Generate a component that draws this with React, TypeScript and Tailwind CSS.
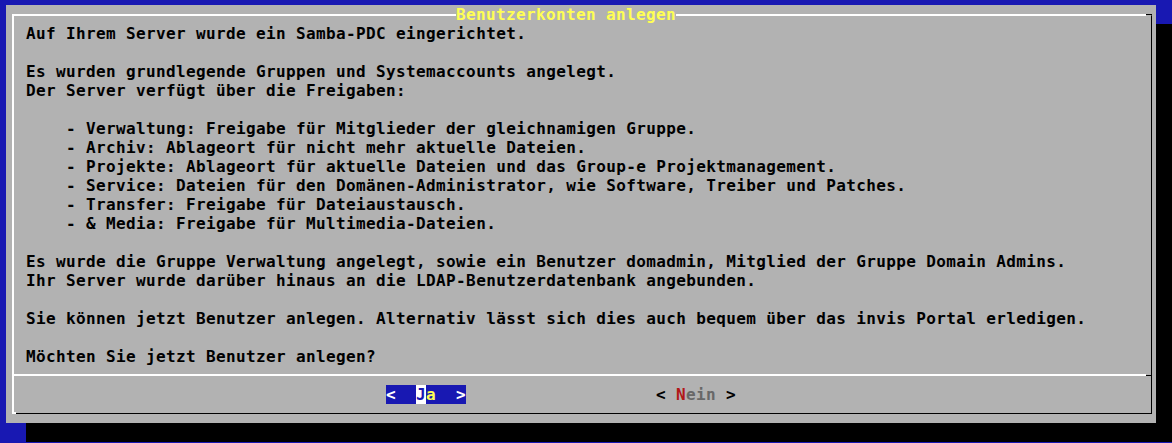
const lines: string[] = [
  'Auf Ihrem Server wurde ein Samba-PDC eingerichtet.',
  '',
  'Es wurden grundlegende Gruppen und Systemaccounts angelegt.',
  'Der Server verfügt über die Freigaben:',
  '',
  '    - Verwaltung: Freigabe für Mitglieder der gleichnamigen Gruppe.',
  '    - Archiv: Ablageort für nicht mehr aktuelle Dateien.',
  '    - Projekte: Ablageort für aktuelle Dateien und das Group-e Projektmanagement.',
  '    - Service: Dateien für den Domänen-Administrator, wie Software, Treiber und Patches.',
  '    - Transfer: Freigabe für Dateiaustausch.',
  '    - & Media: Freigabe für Multimedia-Dateien.',
  '',
  'Es wurde die Gruppe Verwaltung angelegt, sowie ein Benutzer domadmin, Mitglied der Gruppe Domain Admins.',
  'Ihr Server wurde darüber hinaus an die LDAP-Benutzerdatenbank angebunden.',
  '',
  'Sie können jetzt Benutzer anlegen. Alternativ lässt sich dies auch bequem über das invis Portal erledigen.',
  '',
  'Möchten Sie jetzt Benutzer anlegen?',
];

function Button({ label, hot, active }: { label: string; hot: string; active?: boolean }) {
  if (active) {
    return (
      <div className="flex h-[19px] w-[80px] bg-[#1818b2] whitespace-pre text-white">
        <span>{'<  '}</span>
        <span className="bg-white text-[#1818b2]">{hot}</span>
        <span className="text-[#ffff54]">{label}</span>
        <span>{'  >'}</span>
      </div>
    );
  }
  return (
    <div className="flex h-[19px] w-[80px] whitespace-pre text-black">
      <span>{'< '}</span>
      <span className="text-[#b21818]">{hot}</span>
      <span className="text-[#686868]">{label}</span>
      <span>{' >'}</span>
    </div>
  );
}

export default function App() {
  return (
    <div className="h-[443px] w-[1172px] overflow-hidden bg-[#1818b2] pl-[6px] pt-[5px] font-['DejaVu_Sans_Mono',monospace] text-[16px] font-bold leading-[19px] tracking-[0.37px]">
      <div className="h-[418px] w-[1150px] bg-[#b2b2b2] pl-[6px] pt-[9px] shadow-[20px_19px_0_0_#000]">
        <div className="relative flex h-[400px] w-[1140px] flex-col border-t-2 border-l-2 border-r border-b border-t-white border-l-white border-r-black border-b-black">
          <span className="absolute -top-[11px] left-[442px] bg-[#b2b2b2] whitespace-pre text-[#ffff54]">
            Benutzerkonten anlegen
          </span>
          {/* box-drawing corners */}
          <span className="absolute -top-[2px] -right-px flex h-[2px] w-[6px] flex-col">
            <span className="h-px bg-black" />
            <span className="h-px w-[5px] bg-[#b2b2b2]" />
          </span>
          <span className="absolute -bottom-px -left-[2px] h-[2px] w-[4px] bg-white" />

          <div className="pl-[12px] pt-[8px] text-black">
            {lines.map((l, i) => (
              <div key={i} className="h-[19px] whitespace-pre">
                {l}
              </div>
            ))}
          </div>

          <div className="mt-[8px] mb-[9px] flex h-[2px] items-start">
            <div className="h-[2px] w-[1132px] bg-white" />
            <div className="mt-px h-px flex-1 bg-black" />
          </div>

          <div className="flex gap-[190px] pl-[372px]">
            <Button hot="J" label="a" active />
            <Button hot="N" label="ein" />
          </div>
        </div>
      </div>
    </div>
  );
}
